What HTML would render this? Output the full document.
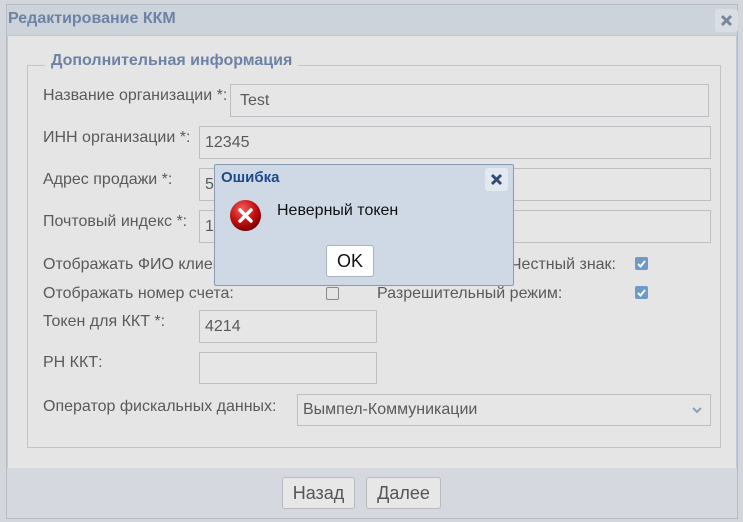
<!DOCTYPE html>
<html><head><meta charset="utf-8"><style>
*{box-sizing:border-box;margin:0;padding:0}
body{width:743px;height:522px;background:#d3d6da;font-family:"Liberation Sans",sans-serif;position:relative;overflow:hidden}
.a{position:absolute}
.lbl{position:absolute;font-size:16px;color:#5a5a5a;line-height:18px;white-space:nowrap}
.inp{position:absolute;border:1px solid #bdbec2;background:#e6e6e6;font-size:16px;color:#5a5a5a;padding-left:9px;display:flex;align-items:center}
.cb{position:absolute;width:13px;height:13px;border-radius:2px;background:#6d9ac8}
.cb svg{display:block}
.btn{position:absolute;border:1px solid #b8babd;border-radius:3px;background:#e7e7e7;font-size:18px;color:#555;display:flex;align-items:center;justify-content:center}
</style></head><body>
<div class="a" style="left:6px;top:4px;width:732px;height:515px;border:1px solid #b5bcc6;background:#cdd3da"></div>
<div class="lbl" style="left:8px;top:10px;font-weight:bold;color:#6e82a6;font-size:16px">Редактирование ККМ</div>
<div class="a" style="left:715px;top:9px;width:23px;height:23px;background:#d9dee4;border-radius:3px"></div>
<svg class="a" style="left:720px;top:14px" width="13" height="13"><path d="M2 2L11 11M11 2L2 11" stroke="#7a8899" stroke-width="3"/></svg>
<div class="a" style="left:7px;top:35px;width:730px;height:433px;background:#e5e5e5;border:1px solid #b8cbe0;border-bottom:none"></div>
<div class="a" style="left:7px;top:468px;width:730px;height:50px;background:#d5d9df"></div>
<div class="a" style="left:27px;top:65px;width:694px;height:383px;border:1px solid #c3c4c6"></div>
<div class="lbl" style="left:45px;top:52px;padding:0 6px;background:#e5e5e5;font-weight:bold;color:#6e82a6">Дополнительная информация</div>

<div class="lbl" style="left:43px;top:87px">Название организации *:</div>
<div class="inp" style="left:230px;top:84px;width:479px;height:33px">Test</div>
<div class="lbl" style="left:43px;top:129px">ИНН организации *:</div>
<div class="inp" style="left:199px;top:126px;width:512px;height:33px;padding-left:5px">12345</div>
<div class="lbl" style="left:43px;top:171px">Адрес продажи *:</div>
<div class="inp" style="left:199px;top:168px;width:512px;height:33px;padding-left:5px">5</div>
<div class="lbl" style="left:43px;top:213px">Почтовый индекс *:</div>
<div class="inp" style="left:199px;top:210px;width:512px;height:33px;padding-left:5px">1</div>
<div class="lbl" style="left:43px;top:256px">Отображать ФИО клиента:</div>
<div class="lbl" style="right:127px;top:256px">Маркировка Честный знак:</div>
<div class="cb" style="left:635px;top:257px"><svg width="13" height="13"><path d="M3 7L5.5 9.5L10 4" stroke="#fff" stroke-width="2" fill="none"/></svg></div>
<div class="lbl" style="left:43px;top:285px">Отображать номер счета:</div>
<div class="a" style="left:326px;top:287px;width:13px;height:13px;border:1px solid #888;border-radius:2px"></div>
<div class="lbl" style="left:377px;top:285px">Разрешительный режим:</div>
<div class="cb" style="left:635px;top:286px"><svg width="13" height="13"><path d="M3 7L5.5 9.5L10 4" stroke="#fff" stroke-width="2" fill="none"/></svg></div>
<div class="lbl" style="left:43px;top:313px">Токен для ККТ *:</div>
<div class="inp" style="left:199px;top:310px;width:178px;height:33px;padding-left:5px">4214</div>
<div class="lbl" style="left:43px;top:354px">РН ККТ:</div>
<div class="inp" style="left:199px;top:352px;width:178px;height:32px"></div>
<div class="lbl" style="left:43px;top:398px">Оператор фискальных данных:</div>
<div class="inp" style="left:297px;top:394px;width:414px;height:32px;padding-left:5px">Вымпел-Коммуникации</div>
<svg class="a" style="left:692px;top:406px" width="10" height="8"><path d="M1 2L5 6L9 2" stroke="#8ca0b8" stroke-width="2" fill="none"/></svg>

<div class="btn" style="left:282px;top:477px;width:73px;height:32px">Назад</div>
<div class="btn" style="left:366px;top:477px;width:75px;height:32px">Далее</div>

<div class="a" style="left:214px;top:164px;width:300px;height:122px;background:#cfd9e6;border:1px solid #8a9bb0;border-radius:2px"></div>
<div class="lbl" style="left:221px;top:169px;font-weight:bold;color:#1f4a8a;font-size:15px">Ошибка</div>
<div class="a" style="left:485px;top:168px;width:23px;height:23px;background:#e3e9f1;border-radius:3px"></div>
<svg class="a" style="left:490px;top:173px" width="13" height="13"><path d="M2 2L11 11M11 2L2 11" stroke="#2f4d77" stroke-width="3"/></svg>
<svg class="a" style="left:229px;top:199px" width="33" height="33"><defs><radialGradient id="g" cx="40%" cy="30%" r="70%"><stop offset="0" stop-color="#f26060"/><stop offset="0.6" stop-color="#c61010"/><stop offset="1" stop-color="#7a0000"/></radialGradient></defs><circle cx="16.5" cy="16.5" r="15.5" fill="url(#g)"/><path d="M11 11L22 22M22 11L11 22" stroke="#fff" stroke-width="3.5" stroke-linecap="round"/></svg>
<div class="lbl" style="left:277px;top:202px;color:#111;font-size:16px">Неверный токен</div>
<div class="a" style="left:326px;top:245px;width:48px;height:32px;background:#fff;border:1px solid #aab3be;border-radius:3px;font-size:18px;color:#111;display:flex;align-items:center;justify-content:center">OK</div>
</body></html>
